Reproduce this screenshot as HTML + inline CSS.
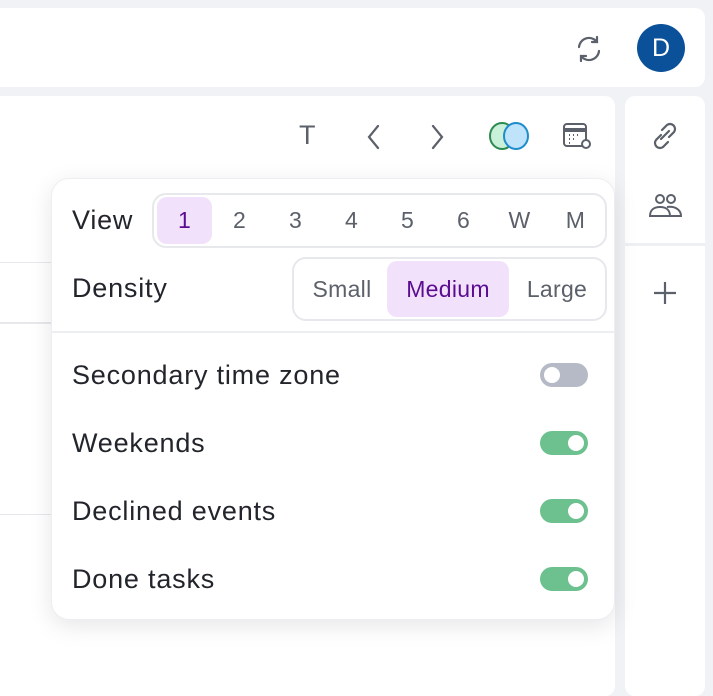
<!DOCTYPE html>
<html><head><style>
*{box-sizing:border-box;margin:0;padding:0}
body{width:713px;height:666px;background:#f0f2f5;position:relative;overflow:hidden;font-family:"Liberation Sans",sans-serif;color:#1f2329}
.top{position:absolute;left:-10px;top:8px;width:715px;height:79px;background:#fff;border-radius:10px}
.main{position:absolute;left:-10px;top:96px;width:625px;height:600px;background:#fff;border-radius:10px}
.side{position:absolute;left:625px;top:96px;width:80px;height:600px;background:#fff;border-radius:10px}
.av{position:absolute;left:637px;top:24px;width:48px;height:48px;border-radius:50%;background:#0a5199;color:#fff;font-size:25px;text-align:center;line-height:48px}
.pop{position:absolute;left:51px;top:178px;width:564px;height:442px;background:#fff;border-radius:18px;box-shadow:0 6px 24px rgba(0,0,0,.10);border:1px solid #eceef1}
.lbl{position:absolute;font-size:27px;letter-spacing:0.8px;color:#22252b;line-height:30px}
.seg{position:absolute;border:2px solid #e6e8ec;border-radius:14px;background:#fff}
.it{position:absolute;font-size:23px;color:#5b606a;text-align:center;letter-spacing:0.3px}
.sel{background:#f1e1fa;color:#5b0d91;border-radius:10px}
.tg{position:absolute;left:488px;width:48px;height:24px;border-radius:12px;background:#6cc18f}
.tg::after{content:"";position:absolute;right:4px;top:4px;width:16px;height:16px;border-radius:50%;background:#fff}
.tg.off{background:#b5bac6}
.tg.off::after{right:auto;left:4px}
.ic{position:absolute;font-size:27px;color:#5b606a}
</style></head><body>
<div class="top"></div>
<div class="main"></div>
<div class="side"></div>
<div style="position:absolute;left:0;top:262px;width:51px;height:1px;background:#e6e8ec"></div>
<div style="position:absolute;left:0;top:322px;width:51px;height:2px;background:#e6e8ec"></div>
<div style="position:absolute;left:0;top:514px;width:51px;height:1px;background:#e6e8ec"></div>
<div style="position:absolute;left:625px;top:243px;width:80px;height:3px;background:#eef0f3"></div>
<svg style="position:absolute;left:572px;top:32px" width="34" height="34" viewBox="0 0 34 34" fill="none" stroke="#5b606a" stroke-width="2.2" stroke-linecap="round"><path d="M7 15a10 10 0 0 1 18-5"/><path d="M27 19a10 10 0 0 1-18 5"/><path d="M25 5v5h-5"/><path d="M9 29v-5h5"/></svg>
<div class="av">D</div>
<div class="ic" style="left:299px;top:120px">T</div>
<svg style="position:absolute;left:364px;top:124px" width="20" height="26" fill="none" stroke="#5b606a" stroke-width="2.2" stroke-linecap="round"><path d="M14 2 5 13l9 11"/></svg>
<svg style="position:absolute;left:428px;top:124px" width="20" height="26" fill="none" stroke="#5b606a" stroke-width="2.2" stroke-linecap="round"><path d="M5 2l9 11-9 11"/></svg>
<svg style="position:absolute;left:488px;top:121px" width="46" height="30"><ellipse cx="14" cy="15" rx="12" ry="13" fill="#c9f0d8" stroke="#2e8a52" stroke-width="2"/><ellipse cx="28" cy="15" rx="12" ry="13" fill="#bfe3fb" stroke="#1f8ccc" stroke-width="2"/></svg>
<svg style="position:absolute;left:562px;top:122px" width="32" height="30" fill="none" stroke="#5b606a" stroke-width="2"><rect x="2" y="2" width="22" height="22" rx="3"/><path d="M2 8h22" stroke-width="4"/><path d="M7 13h1M11 13h1M15 13h1M7 17h1M11 17h1M7 21h1" stroke-width="2"/><circle cx="24" cy="22" r="4" fill="#fff"/></svg>
<svg style="position:absolute;left:648px;top:118px" width="34" height="36" fill="none" stroke="#5b606a" stroke-width="2.2" stroke-linecap="round"><path d="M14 12l5-5a5 5 0 0 1 7 7l-5 5"/><path d="M20 24l-5 5a5 5 0 0 1-7-7l5-5"/><path d="M13 21l8-8"/></svg>
<svg style="position:absolute;left:648px;top:192px" width="36" height="28" fill="none" stroke="#5b606a" stroke-width="2"><circle cx="12" cy="7" r="4"/><circle cx="23" cy="7" r="4"/><path d="M2 24c0-6 4-9 10-9s10 3 10 9z"/><path d="M19 15c7-1 14 2 14 9h-10"/></svg>
<svg style="position:absolute;left:652px;top:280px" width="26" height="26" stroke="#5b606a" stroke-width="2.2"><path d="M13 2v22M2 13h22"/></svg>
<div class="pop">
 <div class="lbl" style="left:20px;top:26px">View</div>
 <div class="seg" style="left:100px;top:14px;width:455px;height:55px"></div>
 <div class="it sel" style="left:105px;top:18px;width:55px;height:47px;line-height:47px">1</div>
 <div class="it" style="left:160px;top:18px;width:55px;line-height:47px">2</div>
 <div class="it" style="left:216px;top:18px;width:55px;line-height:47px">3</div>
 <div class="it" style="left:272px;top:18px;width:55px;line-height:47px">4</div>
 <div class="it" style="left:328px;top:18px;width:55px;line-height:47px">5</div>
 <div class="it" style="left:384px;top:18px;width:55px;line-height:47px">6</div>
 <div class="it" style="left:440px;top:18px;width:55px;line-height:47px">W</div>
 <div class="it" style="left:496px;top:18px;width:55px;line-height:47px">M</div>
 <div class="lbl" style="left:20px;top:94px">Density</div>
 <div class="seg" style="left:240px;top:78px;width:315px;height:64px"></div>
 <div class="it" style="left:245px;top:82px;width:90px;line-height:56px">Small</div>
 <div class="it sel" style="left:335px;top:82px;width:122px;height:56px;line-height:56px">Medium</div>
 <div class="it" style="left:460px;top:82px;width:90px;line-height:56px">Large</div>
 <div style="position:absolute;left:0;top:152px;width:562px;height:2px;background:#eceef1"></div>
 <div class="lbl" style="left:20px;top:181px">Secondary time zone</div><div class="tg off" style="top:184px"></div>
 <div class="lbl" style="left:20px;top:249px">Weekends</div><div class="tg" style="top:252px"></div>
 <div class="lbl" style="left:20px;top:317px">Declined events</div><div class="tg" style="top:320px"></div>
 <div class="lbl" style="left:20px;top:385px">Done tasks</div><div class="tg" style="top:388px"></div>
</div>
</body></html>
